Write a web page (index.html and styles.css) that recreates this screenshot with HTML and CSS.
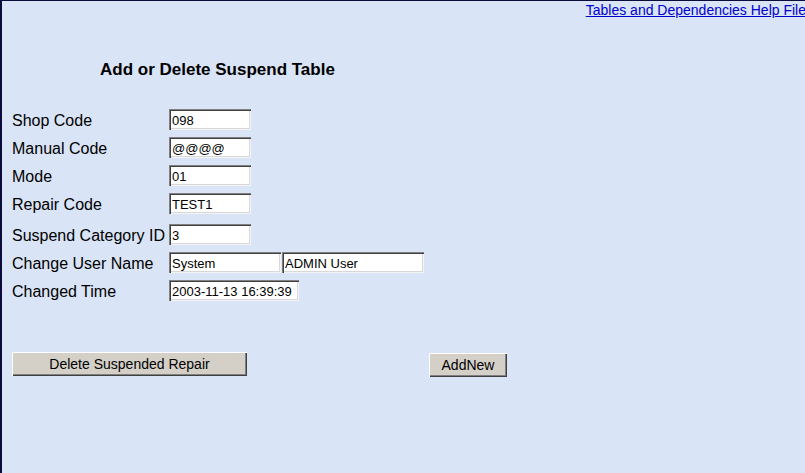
FILE: index.html
```html
<!DOCTYPE html>
<html>
<head>
<meta charset="utf-8">
<title>Add or Delete Suspend Table</title>
<link rel="stylesheet" href="styles.css">
</head>
<body>
<div class="page">
  <div class="topbar"><a class="help" href="#">Tables and Dependencies Help File</a></div>
  <h1 class="title">Add or Delete Suspend Table</h1>
  <div class="form">
    <div class="row"><span class="label">Shop Code</span><span class="field"><input class="box w81" value="098"></span></div>
    <div class="row"><span class="label">Manual Code</span><span class="field"><input class="box w81" value="@@@@"></span></div>
    <div class="row"><span class="label">Mode</span><span class="field"><input class="box w81" value="01"></span></div>
    <div class="row"><span class="label">Repair Code</span><span class="field"><input class="box w81" value="TEST1"></span></div>
    <div class="row row-gap"><span class="label">Suspend Category ID</span><span class="field"><input class="box w81" value="3"></span></div>
    <div class="row"><span class="label">Change User Name</span><span class="field"><input class="box w112" value="System"><input class="box w142" value="ADMIN User"></span></div>
    <div class="row"><span class="label">Changed Time</span><span class="field"><input class="box w129" value="2003-11-13 16:39:39"></span></div>
  </div>
  <div class="actions">
    <button class="btn btn-delete">Delete Suspended Repair</button>
    <button class="btn btn-add">AddNew</button>
  </div>
</div>
</body>
</html>
```
FILE: styles.css
```css
html, body {
  margin: 0;
  padding: 0;
  height: 100%;
}
body {
  background: #d9e4f6;
  font-family: "Liberation Sans", Arial, sans-serif;
  color: #000;
}
.page {
  box-sizing: border-box;
  height: 473px;
  border-top: 1px solid #0c0c3c;
  border-left: 2px solid #0c0c3c;
  padding-left: 10px;
  overflow: hidden;
}
.topbar {
  display: flex;
  justify-content: flex-end;
  padding-top: 1px;
  height: 16px;
  margin-right: -1px;
}
.help {
  font-size: 14px;
  line-height: 16px;
  color: #0000cc;
  text-decoration: underline;
  white-space: nowrap;
}
.title {
  margin: 42px 0 0 88px;
  font-size: 17px;
  line-height: 20px;
  font-weight: bold;
}
.form {
  margin-top: 29px;
  display: flex;
  flex-direction: column;
  gap: 7px;
}
.row {
  display: flex;
  align-items: center;
  height: 21px;
}
.row-gap {
  margin-top: 3px;
}
.label {
  width: 157px;
  font-size: 16px;
  padding-top: 2px;
  white-space: nowrap;
}
.field {
  display: flex;
  gap: 1px;
}
.box {
  box-sizing: border-box;
  height: 21px;
  margin: 0;
  border: none;
  padding: 2px 3px 1px 3px;
  background: #fff;
  font-family: "Liberation Sans", Arial, sans-serif;
  font-size: 13px;
  color: #000;
  box-shadow: inset 1px 1px 0 #808080, inset 2px 2px 0 #404040, inset -1px -1px 0 #f4f4f4, inset -2px -2px 0 #d8d8d8;
  outline: none;
}
.w81 { width: 82px; }
.w112 { width: 112px; }
.w142 { width: 142px; }
.w129 { width: 130px; }
.actions {
  margin-top: 51px;
  display: flex;
  align-items: flex-start;
  gap: 182px;
}
.btn {
  box-sizing: border-box;
  height: 24px;
  margin: 0;
  border: none;
  padding: 0 6px 0 6px;
  background: #d4d0c8;
  font-family: "Liberation Sans", Arial, sans-serif;
  font-size: 14px;
  color: #000;
  box-shadow: inset 1px 1px 0 #ffffff, inset -1px -1px 0 #404040, inset -2px -2px 0 #808080;
}
.btn-delete { width: 235px; }
.btn-add { width: 78px; margin-top: 1px; }
```
